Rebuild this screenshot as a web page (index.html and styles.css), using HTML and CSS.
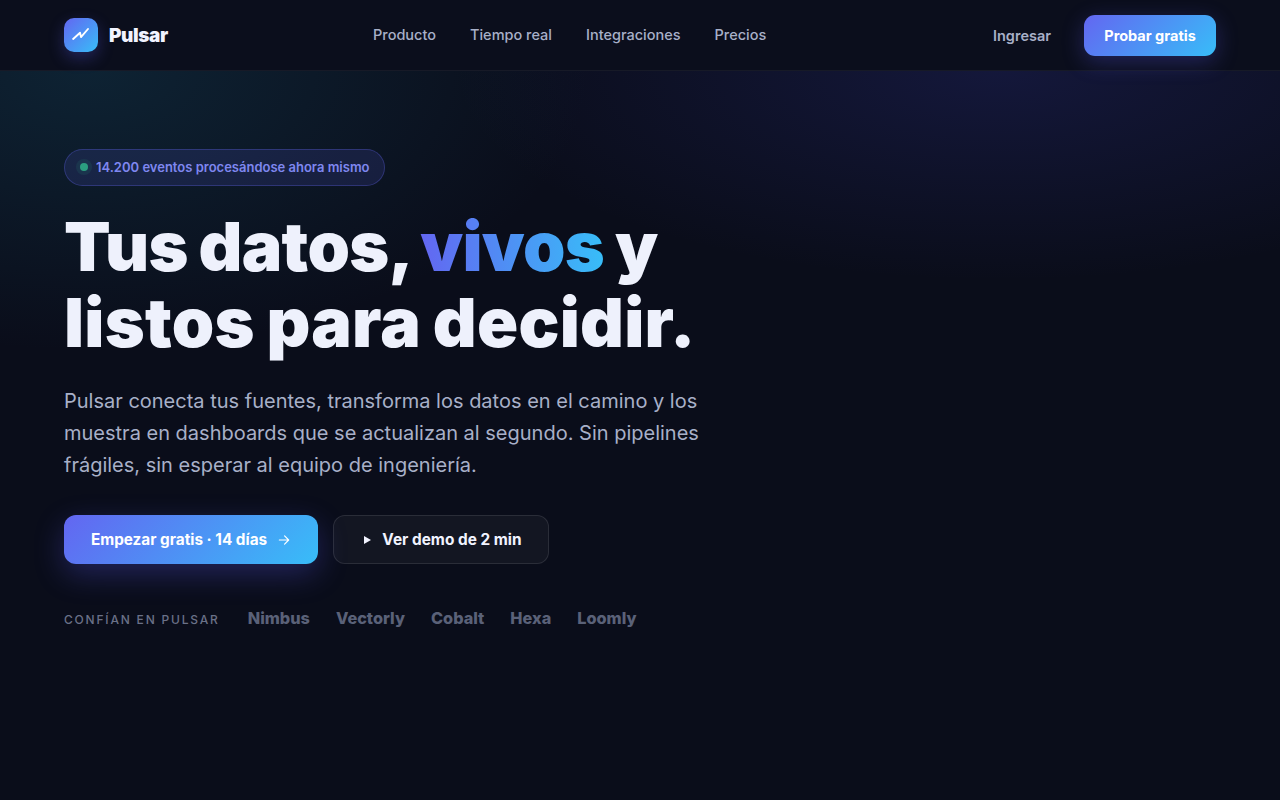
FILE: index.html
```html
<!DOCTYPE html>
<html lang="es">
<head>
<meta charset="utf-8">
<title>Pulsar</title>
<link rel="stylesheet" href="styles.css">
</head>
<body>
<header class="nav">
  <a class="brand" href="#">
    <span class="logo"><svg width="18" height="18" viewBox="0 0 24 24" fill="none" stroke="#fff" stroke-width="2.5" stroke-linecap="round" stroke-linejoin="round"><path d="M1.5 17.3L10.7 9 12 14.7 21.3 4"/></svg></span>
    <span class="brand-name">Pulsar</span>
  </a>
  <nav class="links">
    <a href="#">Producto</a>
    <a href="#">Tiempo real</a>
    <a href="#">Integraciones</a>
    <a href="#">Precios</a>
  </nav>
  <div class="actions">
    <a class="login" href="#">Ingresar</a>
    <a class="try" href="#">Probar gratis</a>
  </div>
</header>
<main class="hero">
  <div class="pill"><span class="dot"></span>14.200 eventos procesándose ahora mismo</div>
  <h1>Tus datos, <span class="grad">vivos</span> y<br><span class="line-two">listos para decidir.</span></h1>
  <p class="lead">Pulsar conecta tus fuentes, transforma los datos en el camino y los muestra en dashboards que se actualizan al segundo. Sin pipelines frágiles, sin esperar al equipo de ingeniería.</p>
  <div class="cta">
    <a class="primary" href="#">Empezar gratis · 14 días <svg width="14" height="14" viewBox="0 0 24 24" fill="none" stroke="#fff" stroke-width="2" stroke-linecap="round" stroke-linejoin="round"><path d="M4 12h16M13 5l7 7-7 7"/></svg></a>
    <a class="secondary" href="#"><svg width="10" height="10" viewBox="0 0 10 10"><path d="M3 1l7 4-7 4z" fill="#f1f3ff"/></svg>Ver demo de 2 min</a>
  </div>
  <div class="trust">
    <span class="trust-label">CONFÍAN EN PULSAR</span>
    <div class="trust-logos"><span>Nimbus</span><span>Vectorly</span><span>Cobalt</span><span>Hexa</span><span>Loomly</span></div>
  </div>
</main>
</body>
</html>
```
FILE: styles.css
```css
* { box-sizing: border-box; }
html, body { margin: 0; height: 100%; }
body {
  width: 1280px;
  height: 800px;
  overflow: hidden;
  font-family: "Inter", "Liberation Sans", sans-serif;
  color: #f1f3ff;
  background:
    radial-gradient(ellipse 640px 360px at 90px 70px, rgba(22, 85, 110, .30), transparent 78%),
    radial-gradient(ellipse 700px 270px at 1000px 70px, rgba(60, 65, 190, .2), transparent 78%),
    #0a0d1a;
}
a { text-decoration: none; color: inherit; }
.nav {
  height: 71px;
  padding: 0 64px;
  display: flex;
  align-items: center;
  background: #0b0e1c;
  border-bottom: 1px solid rgba(255, 255, 255, .05);
}
.brand { display: flex; align-items: center; gap: 11px; width: 309px; }
.logo {
  width: 34px; height: 34px; border-radius: 10px;
  display: flex; align-items: center; justify-content: center;
  background: linear-gradient(135deg, #6366f1, #38bdf8);
  box-shadow: 0 6px 16px rgba(90, 90, 240, .3);
}
.brand-name { font-size: 19px; font-weight: 900; letter-spacing: -.4px; }
.links { display: flex; gap: 34px; padding-bottom: 2px; font-size: 14.5px; font-weight: 500; color: #a8b0c8; }
.actions { margin-left: auto; display: flex; align-items: center; gap: 33px; }
.login { font-size: 14.5px; font-weight: 600; color: #a8b0c8; }
.try {
  height: 41px; width: 132px; border-radius: 11px;
  display: flex; align-items: center; justify-content: center;
  font-size: 14.5px; font-weight: 700; color: #fff;
  background: linear-gradient(135deg, #6366f1, #38bdf8);
  box-shadow: 0 6px 22px rgba(90, 90, 240, .3);
}
.hero { padding: 78px 64px 0; }
.pill {
  display: inline-flex; align-items: center; gap: 8px;
  height: 37px; padding: 0 14px 2px 15px;
  border-radius: 19px;
  border: 1px solid rgba(99, 102, 241, .3);
  background: rgba(99, 102, 241, .14);
  font-size: 13px; font-weight: 600; color: #7f87f0;
}
.dot { width: 8px; height: 8px; border-radius: 50%; background: #34d399; box-shadow: 0 0 0 4px rgba(52, 211, 153, .13); opacity: .7; }
h1 {
  margin: 22px 0 0;
  font-size: 68px; line-height: 76px; font-weight: 900; letter-spacing: -.7px; word-spacing: -2px;
  color: #eef1fc;
}
.line-two { letter-spacing: .25px; }
.grad { background: linear-gradient(90deg, #6366f1, #38bdf8); -webkit-background-clip: text; background-clip: text; color: transparent; }
.lead { margin: 25px 0 0; width: 650px; font-size: 20px; line-height: 32px; color: #a8b0c8; }
.cta { margin-top: 34px; display: flex; gap: 15px; }
.primary, .secondary {
  height: 49px; border-radius: 12px;
  display: flex; align-items: center; justify-content: center;
  font-weight: 700;
}
.primary {
  width: 254px; gap: 10px; color: #fff; font-size: 15.3px;
  background: linear-gradient(135deg, #6366f1, #38bdf8);
  box-shadow: 0 10px 30px rgba(90, 90, 240, .3);
}
.secondary {
  width: 216px; gap: 11px; padding-left: 1px; font-size: 15.4px;
  background: rgba(255, 255, 255, .04);
  border: 1px solid rgba(255, 255, 255, .1);
}
.trust { margin-top: 44px; display: flex; align-items: center; gap: 28px; }
.trust-label { font-size: 12px; letter-spacing: 1.8px; font-weight: 500; color: #6a7188; }
.trust-logos { display: flex; gap: 26px; padding-bottom: 2px; font-size: 16.3px; font-weight: 800; color: #5a6178; }
```
